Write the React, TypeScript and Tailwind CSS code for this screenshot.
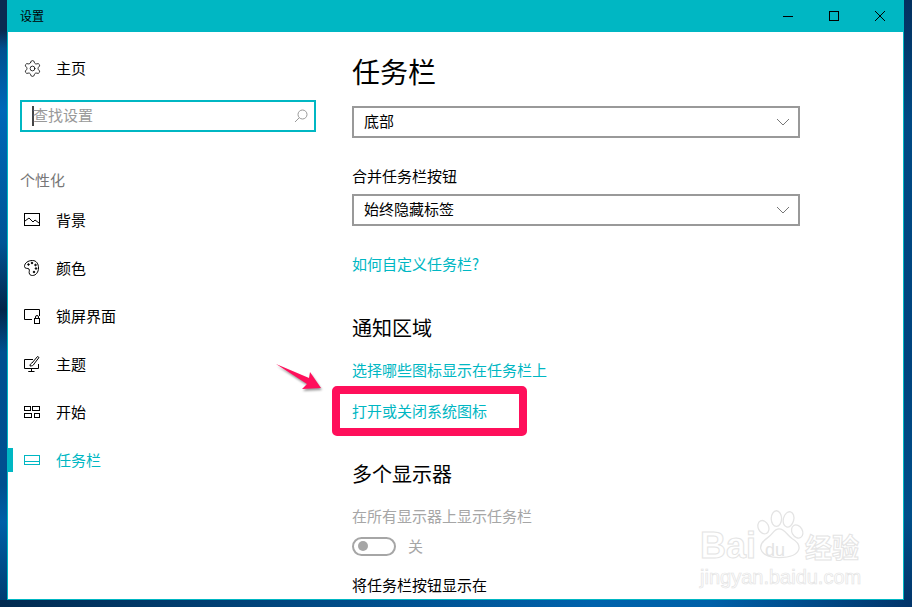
import { Settings } from "lucide-react";

const font = "font-['Noto_Sans_CJK_SC','Liberation_Sans',sans-serif]";

const navItems = [
  { label: "背景", icon: "picture" },
  { label: "颜色", icon: "palette" },
  { label: "锁屏界面", icon: "lock" },
  { label: "主题", icon: "theme" },
  { label: "开始", icon: "start" },
  { label: "任务栏", icon: "taskbar", active: true },
];

function NavIcon({ name }: { name: string }) {
  const common = {
    width: 16,
    height: 16,
    viewBox: "0 0 16 16",
    fill: "none",
    stroke: "currentColor",
    strokeWidth: 1,
  };
  if (name === "picture")
    return (
      <svg {...common}>
        <rect x="0.5" y="1.5" width="15" height="12" />
        <path d="M1 9l4-3 4 4 2-2 4 3" />
      </svg>
    );
  if (name === "palette")
    return (
      <svg {...common}>
        <path d="M8.5.5C4 .5.5 3 .5 6.5c0 2.500 3.500 1.500 4.500 2.500 1 1.500-.5 3 .5 5 .7 1.300 2 1.500 3 1.500 3.500 0 6-3.500 6-7.500S12.500.5 8.500.500z" />
        <circle cx="4.500" cy="4.500" r="0.800" fill="currentColor" />
        <circle cx="8" cy="3" r="0.800" fill="currentColor" />
        <circle cx="11.500" cy="5" r="0.800" fill="currentColor" />
        <circle cx="12" cy="8.500" r="0.800" fill="currentColor" />
        <circle cx="10" cy="12" r="0.800" fill="currentColor" />
      </svg>
    );
  if (name === "lock")
    return (
      <svg {...common}>
        <path d="M8 11.500H.5v-10h15V8" />
        <rect x="10.500" y="10.500" width="5" height="5" />
        <path d="M11.500 10.500V9a1.500 1.500 0 0 1 3 0v1.500" />
      </svg>
    );
  if (name === "theme")
    return (
      <svg {...common}>
        <path d="M9 3.500H.5v9h14V8M7.500 15.500h-3 6M7.500 12.500v3" />
        <path d="M6 10c0-2 1-2.500 2-3l5.500-6.500 1.500 1L10 8c-.5 1.500-2 2-4 2z" />
      </svg>
    );
  if (name === "start")
    return (
      <svg {...common}>
        <rect x="0.500" y="2.500" width="6" height="4" />
        <rect x="8.500" y="2.500" width="7" height="4" />
        <rect x="0.500" y="9.500" width="7" height="4" />
        <rect x="10.500" y="9.500" width="5" height="4" />
      </svg>
    );
  return (
    <svg {...common}>
      <rect x="0.500" y="3.500" width="15" height="9" />
      <path d="M1 9.500h14" />
    </svg>
  );
}

export default function App() {
  return (
    <div
      className={`${font} relative w-[912px] h-[607px] overflow-hidden pl-[7px] pr-[8px] pb-[7px] bg-no-repeat bg-[linear-gradient(90deg,#012a50_0%,#014a85_35%,#0062ac_65%,#0060a8_78%,#02356a_100%),linear-gradient(180deg,#03305f_0%,#004a85_20%,#00447f_60%,#004f8a_85%,#02356a_100%),linear-gradient(180deg,#0a2a50_0%,#0a2a50_5%,#004f8f_8%,#0068b8_18%,#005495_40%,#02264a_51%,#005090_58%,#00508f_80%,#0060a8_86%,#003a6c_100%)] [background-size:100%_7px,8px_100%,7px_100%] [background-position:0_100%,100%_0,0_0]`}
    >
      <div className="relative h-full border-x border-b border-[#00b7c3] bg-white flex flex-col overflow-hidden">
        {/* Title bar */}
        <div className="h-[32px] shrink-0 bg-[#00b7c3] flex items-center pl-[12px] text-[12px] text-black">
          <span className="flex-1 pb-[1px]">设置</span>
          <div className="flex items-center">
            <div className="w-[46px] h-[32px] flex items-center justify-center">
              <div className="w-[10px] h-px bg-black" />
            </div>
            <div className="w-[46px] h-[32px] flex items-center justify-center">
              <div className="w-[10px] h-[10px] border border-black" />
            </div>
            <div className="w-[46px] h-[32px] flex items-center justify-center">
              <svg width="10" height="10" viewBox="0 0 10 10" stroke="black" strokeWidth="1">
                <path d="M0 0l10 10M10 0L0 10" />
              </svg>
            </div>
          </div>
        </div>

        <div className="flex flex-1 min-h-0">
          {/* Sidebar */}
          <aside className="w-[344px] shrink-0 text-[15px]">
            <div className="h-[48px] mt-[12px] flex items-center pl-[15px] text-black">
              <Settings size={19} strokeWidth={1} />
              <span className="ml-[14px]">主页</span>
            </div>
            <div className="ml-[12px] mt-[8px] w-[296px] h-[32px] border-2 border-[#00b7c3] flex items-center pl-[10px] pr-[6px]">
              <div className="w-[2px] h-[20px] bg-[#444] -mr-[1px]" />
              <span className="flex-1 text-[#999] leading-none pb-[3px]">查找设置</span>
              <svg width="14" height="14" viewBox="0 0 14 14" fill="none" stroke="#999" strokeWidth="1">
                <circle cx="8.500" cy="5.500" r="4.500" />
                <path d="M5.200 8.800L1 13" />
              </svg>
            </div>
            <div className="ml-[12px] mt-[36px] h-[24px] flex items-center text-[#767676]">个性化</div>
            <div className="mt-[4px]">
              {navItems.map((item) => (
                <div
                  key={item.label}
                  className={`relative h-[48px] flex items-center pl-[16px] ${item.active ? "text-[#00b7c3]" : "text-black"}`}
                >
                  {item.active && <div className="absolute left-0 top-[12px] w-[5px] h-[24px] bg-[#00b7c3]" />}
                  <NavIcon name={item.icon} />
                  <span className="ml-[16px]">{item.label}</span>
                </div>
              ))}
            </div>
          </aside>

          {/* Content */}
          <main className="flex-1 min-w-0 text-[15px] text-black">
            <h1 className="h-[42px] mt-[18px] flex items-center text-[28px] leading-none">任务栏</h1>
            <Select className="mt-[14px]" label="底部" />
            <div className="mt-[26px] h-[24px] flex items-center">合并任务栏按钮</div>
            <Select className="mt-[6px]" label="始终隐藏标签" />
            <a className="mt-[26px] h-[24px] flex items-center text-[#00b7c3]">如何自定义任务栏?</a>
            <h2 className="mt-[36px] h-[32px] flex items-center text-[20px] leading-none">通知区域</h2>
            <a className="mt-[14px] h-[24px] flex items-center text-[#00b7c3]">选择哪些图标显示在任务栏上</a>
            <a className="mt-[17px] h-[24px] flex items-center text-[#00b7c3]">打开或关闭系统图标</a>
            <h2 className="mt-[35px] h-[32px] flex items-center text-[20px] leading-none">多个显示器</h2>
            <div className="mt-[14px] h-[24px] flex items-center text-[#a6a6a6]">在所有显示器上显示任务栏</div>
            <div className="mt-[7px] flex items-center">
              <div className="w-[44px] h-[19px] rounded-full border-2 border-[#a6a6a6] flex items-center pl-[4px]">
                <div className="w-[10px] h-[10px] rounded-full bg-[#a6a6a6]" />
              </div>
              <span className="ml-[12px] text-[#a6a6a6]">关</span>
            </div>
            <div className="mt-[16px] h-[24px] flex items-center">将任务栏按钮显示在</div>
          </main>
        </div>
      </div>

      {/* Red annotation */}
      <div className="absolute left-[332px] top-[386px] w-[195px] h-[50px] border-[8px] border-[#ff0f5b] rounded-[5px]" />
      <svg className="absolute left-[270px] top-[358px] drop-shadow-[1px_2px_1px_rgba(0,0,0,0.4)]" width="60" height="40" viewBox="0 0 60 40">
        <path d="M6 6L39 20 40 14 51 30 32 31 37 26z" fill="#ff0f5b" />
      </svg>

      {/* Baidu watermark */}
      <div className="absolute left-[698px] top-[508px] w-[190px] h-[95px] text-[#e4e4e4]">
        <svg className="absolute left-[55px] top-0" width="52" height="54" viewBox="0 0 60 58" fill="white" stroke="#e4e4e4" strokeWidth="1.500">
          <ellipse cx="12" cy="20" rx="6" ry="8" transform="rotate(-25 12 20)" />
          <ellipse cx="27" cy="10" rx="6" ry="9" />
          <ellipse cx="41" cy="11" rx="6" ry="9" transform="rotate(15 41 11)" />
          <ellipse cx="51" cy="25" rx="6" ry="8" transform="rotate(-30 51 25)" />
          <path d="M30 22c-6 0-7 6-13 10-6 4-9 8-8 13 2 8 10 10 21 10 12 0 21-2 23-10 1-5-3-9-8-12-6-4-8-11-15-11z" />
        </svg>
        <span className="absolute left-[2px] top-[20px] text-[36px] leading-none font-['Liberation_Sans',sans-serif] font-bold text-white [-webkit-text-stroke:1px_#e4e4e4]">Bai</span>
        <span className="absolute left-[67px] top-[33px] text-[18px] leading-none font-['Liberation_Sans',sans-serif] text-[#e4e4e4]">du</span>
        <span className="absolute left-[107px] top-[25px] text-[27px] leading-none font-bold text-white [-webkit-text-stroke:1px_#e4e4e4]">经验</span>
        <span className="absolute left-[2px] top-[59px] text-[20px] leading-none font-['Liberation_Sans',sans-serif] text-white [-webkit-text-stroke:0.7px_#e4e4e4]">jingyan.baidu.com</span>
      </div>
    </div>
  );
}

function Select({ label, className }: { label: string; className: string }) {
  return (
    <div className={`${className} w-[448px] h-[32px] border-2 border-[#999] flex items-center pl-[10px] pr-[8px]`}>
      <span className="flex-1 pb-[2px]">{label}</span>
      <svg width="14" height="8" viewBox="0 0 14 8" fill="none" stroke="#777" strokeWidth="1">
        <path d="M1 1l6 6 6-6" />
      </svg>
    </div>
  );
}
